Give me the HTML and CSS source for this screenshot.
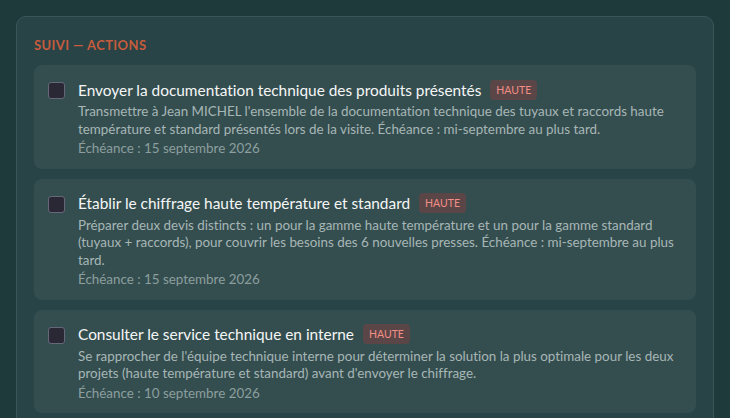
FILE: index.html
```html
<!DOCTYPE html>
<html lang="fr">
<head>
    <meta charset="UTF-8">
    <meta name="viewport" content="width=device-width, initial-scale=1.0">
    <title>Suivi — Actions</title>
    <link rel="stylesheet" href="styles.css">
</head>
<body>

    <div class="panel">
        <div class="panel-title">Suivi — Actions</div>

        <div class="actions">
            <div class="action">
                <span class="check"></span>
                <div class="body">
                    <div class="head">
                        <span class="label">Envoyer la documentation technique des produits présentés</span>
                        <span class="badge">HAUTE</span>
                    </div>
                    <div class="desc">Transmettre à Jean MICHEL l'ensemble de la documentation technique des tuyaux et raccords haute température et standard présentés lors de la visite. Échéance : mi-septembre au plus tard.</div>
                    <div class="due">Échéance : 15 septembre 2026</div>
                </div>
            </div>

            <div class="action">
                <span class="check"></span>
                <div class="body">
                    <div class="head">
                        <span class="label">Établir le chiffrage haute température et standard</span>
                        <span class="badge">HAUTE</span>
                    </div>
                    <div class="desc">Préparer deux devis distincts : un pour la gamme haute température et un pour la gamme standard (tuyaux + raccords), pour couvrir les besoins des 6 nouvelles presses. Échéance : mi-septembre au plus tard.</div>
                    <div class="due">Échéance : 15 septembre 2026</div>
                </div>
            </div>

            <div class="action">
                <span class="check"></span>
                <div class="body">
                    <div class="head">
                        <span class="label">Consulter le service technique en interne</span>
                        <span class="badge">HAUTE</span>
                    </div>
                    <div class="desc">Se rapprocher de l'équipe technique interne pour déterminer la solution la plus optimale pour les deux projets (haute température et standard) avant d'envoyer le chiffrage.</div>
                    <div class="due">Échéance : 10 septembre 2026</div>
                </div>
            </div>
        </div>
    </div>

</body>
</html>
```

FILE: styles.css
```css
*{
    box-sizing: border-box;
}
html, body{
    margin: 0;
    padding: 0;
}

body{
    background-color: #1e3a3b;
    font-family: Lato, 'Noto Sans', sans-serif;
    font-variant-ligatures: none;
    padding: 16px;
    height: 418px;
    overflow: hidden;
}

.panel{
    background-color: #294446;
    border: 1px solid #3b5658;
    border-radius: 10px;
    padding: 21px 17px 20px;
}

.panel-title{
    color: #c65b3d;
    font-size: 13px;
    font-weight: bold;
    text-transform: uppercase;
    letter-spacing: .4px;
    line-height: 14px;
    margin-bottom: 13px;
}

.actions{
    display: flex;
    flex-direction: column;
    gap: 10px;
}

.action{
    display: flex;
    gap: 13px;
    background-color: #344e4f;
    border-radius: 8px;
    padding: 14px 14px 11px;
}

.check{
    flex: none;
    width: 17px;
    height: 17px;
    margin-top: 3px;
    background-color: #2b2836;
    border: 1px solid #66687a;
    border-radius: 3px;
}

.body{
    flex: 1;
}

.head{
    display: flex;
    align-items: center;
    gap: 9px;
    height: 21px;
}

.label{
    color: #f4f6f6;
    font-size: 15.4px;
}

.badge{
    background-color: #5a4647;
    color: #f28e86;
    font-size: 10.5px;
    line-height: 20px;
    padding: 0 6px;
    border-radius: 4px;
}

.desc{
    color: #a7b6b6;
    font-size: 13.4px;
    line-height: 17.5px;
    margin-top: 3px;
}

.due{
    color: #8c9e9e;
    font-size: 13.4px;
    line-height: 17.5px;
    margin-top: 2px;
}
```
